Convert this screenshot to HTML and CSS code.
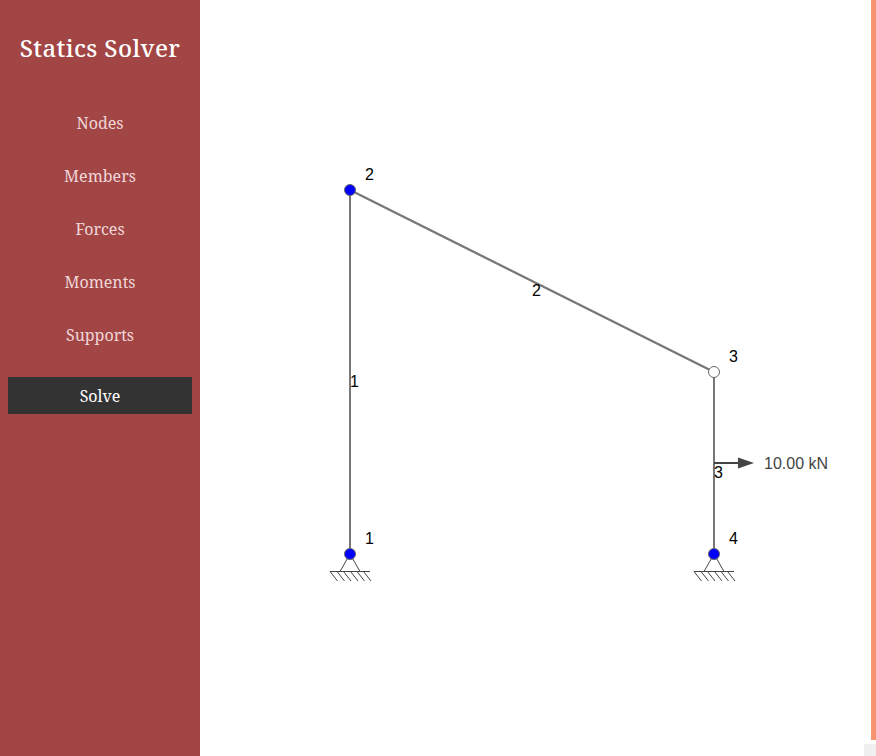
FILE: index.html
```html
<!DOCTYPE html>
<html lang="en">
<head>
<meta charset="utf-8">
<title>Statics Solver</title>
<link rel="stylesheet" href="styles.css">
</head>
<body>
<aside class="sidebar">
<h1>Statics Solver</h1>
<nav><a>Nodes</a><a>Members</a><a>Forces</a><a>Moments</a><a>Supports</a></nav>
<button class="solve">Solve</button>
</aside>
<main class="canvas">
<svg width="664" height="756" viewBox="200 0 664 756">
<defs>
<g id="support" fill="none" stroke="#444" stroke-width="1">
<path d="M0 0L-10 17.5H10Z" fill="#fff"/>
<path d="M-20 17.5H20M-20 17.500l7.500 9.500M-13 17.500l7.500 9.500M-6.500 17.500l7.500 9.500M0.500 17.500l7.500 9.500M7 17.500l7.500 9.500M13.500 17.500l7.500 9.500"/>
</g>
</defs>
<use href="#support" x="350" y="554"/>
<use href="#support" x="714" y="554"/>
<path class="member" d="M350 554V190M714 372V554"/>
<path class="member diagonal" d="M350 190L714 372"/>
<path d="M714 463H740" stroke="#444" stroke-width="2"/>
<path d="M738 457.5L754 463L738 468.500Z" fill="#444"/>
<g class="nodes"><circle cx="350" cy="554" r="5.500"/><circle cx="350" cy="190" r="5.500"/><circle class="hinge" cx="714" cy="372" r="5.500"/><circle cx="714" cy="554" r="5.500"/></g>
<g class="labels"><text x="365" y="544">1</text><text x="365" y="180">2</text><text x="729" y="362">3</text><text x="729" y="544">4</text><text x="350" y="387">1</text><text x="532" y="296">2</text><text x="714" y="478">3</text><text class="load" x="764" y="469">10.00 kN</text></g>
</svg>
</main>
<div class="edge"><div class="accent"></div><div class="corner"></div></div>
</body>
</html>
```
FILE: styles.css
```css
body{margin:0;height:756px;display:flex;overflow:hidden;background:#fff}
.sidebar{width:200px;box-sizing:border-box;padding:0 8px;background:#a24545;font-family:"Roboto Slab","Noto Serif","DejaVu Serif",serif;text-align:center;color:#fff}
h1{margin:32px 0 48px;font-size:24px;line-height:32px;font-weight:500;letter-spacing:.35px;white-space:nowrap}
nav{display:flex;flex-direction:column}
nav a{height:53px;font-size:16px;line-height:22px;color:#f0d6d8}
.solve{display:block;width:184px;height:37px;padding:1px 0 0;border:0;background:#333;color:#fff;font:16px "Roboto Slab","Noto Serif","DejaVu Serif",serif}
.canvas{width:664px}
.canvas svg{display:block}
.member{fill:none;stroke:#777;stroke-width:2}
.diagonal{stroke-width:2.3}
.nodes circle{fill:#00f;stroke:#666;stroke-width:1}
.nodes .hinge{fill:#fff}
.labels{font:16px "Liberation Sans",Arial,sans-serif}
.labels .load{fill:#444}
.edge{width:12px;display:flex;flex-direction:column;align-items:flex-end;justify-content:space-between}
.accent{width:5px;height:740px;background:#f79470}
.corner{width:12px;height:12px;background:#f1f0f0}
```
